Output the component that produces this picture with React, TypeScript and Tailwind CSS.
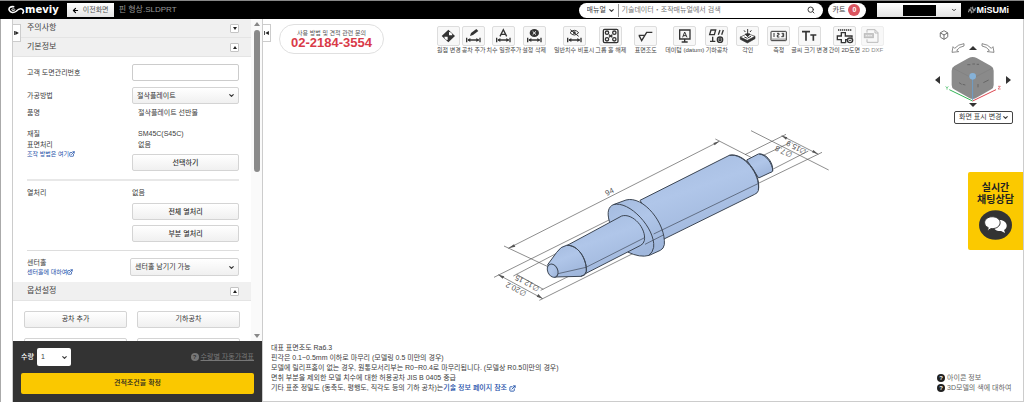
import { useState } from "react";
import type { ReactNode } from "react";
import { ArrowLeft, Box, ChevronDown, ExternalLink, Search } from "lucide-react";

type Tool = {
  label: string;
  icon: ReactNode;
  disabled?: boolean;
};

const buttonStyle =
  "rounded-[2px] border border-[#d4d4d4] bg-gradient-to-b from-white to-[#f0f0f0] text-[#333]";

// Horizontal dimension arrow shared by several tool icons
const DimensionArrow = () => (
  <g>
    <path d="M14 35v14M54 35v14M18 42h32" stroke="#333" strokeWidth="4" />
    <path d="M16 42l9-6v12zM52 42l-9-6v12z" fill="#333" />
  </g>
);

const toolGroups: Tool[][] = [
  [
    {
      label: "원점 변경",
      icon: (
        <g>
          <path d="M34 11l20 19-20 19-20-19z" fill="#333" />
          <path d="M36 28V18a11 11 0 0 1 10 10zM32 32v10a11 11 0 0 1-10-10z" fill="#fff" />
        </g>
      ),
    },
    {
      label: "공차 추가",
      icon: (
        <g>
          <path d="M24 30l3-9 16-12 6 6-16 12z" fill="#333" />
          <DimensionArrow />
        </g>
      ),
    },
    {
      label: "치수 일괄추가",
      icon: (
        <g>
          <path d="M24 31L34 11l10 20M28 25h12" fill="none" stroke="#333" strokeWidth="4" />
          <DimensionArrow />
        </g>
      ),
    },
    {
      label: "설정 삭제",
      icon: (
        <g>
          <ellipse cx="34" cy="21" rx="14" ry="12" fill="#333" />
          <path d="M29 16l10 10M39 16l-10 10" stroke="#fff" strokeWidth="3" />
          <DimensionArrow />
        </g>
      ),
    },
  ],
  [
    {
      label: "일반치수 비표시",
      icon: (
        <g>
          <path d="M21 20q13-14 26 0q-13 14-26 0z" fill="none" stroke="#333" strokeWidth="3" />
          <circle cx="34" cy="20" r="4" fill="#333" />
          <path d="M22 11l25 20" stroke="#333" strokeWidth="3" />
          <DimensionArrow />
        </g>
      ),
    },
    {
      label: "그룹 홀 해제",
      icon: (
        <g fill="none" stroke="#333" strokeWidth="4">
          <rect x="13" y="10" width="44" height="40" rx="4" />
          <circle cx="24" cy="20" r="5" />
          <circle cx="46" cy="20" r="5" />
          <circle cx="24" cy="40" r="5" />
          <circle cx="46" cy="40" r="5" />
          <path d="M30 26l10 8M40 26l-10 8" />
        </g>
      ),
    },
  ],
  [
    {
      label: "표면조도",
      icon: <path d="M14 28h17M15 28l8 16 15-25h17" fill="none" stroke="#333" strokeWidth="4" />,
    },
  ],
  [
    {
      label: "데이텀 (datum)",
      icon: (
        <g>
          <path d="M20 12h31v27H20zM35 39v8M26 48h18" fill="none" stroke="#333" strokeWidth="4" />
          <path d="M29 34l6-16 7 16M31 29h8" fill="none" stroke="#333" strokeWidth="3" />
        </g>
      ),
    },
    {
      label: "기하공차",
      icon: (
        <g fill="none" stroke="#333" strokeWidth="4">
          <path d="M18 12h14l-4 14H14zM40 26l5-14M50 26l5-14M23 32v14M15 46h16" />
          <circle cx="45" cy="41" r="8" />
          <circle cx="45" cy="41" r="3" />
        </g>
      ),
    },
  ],
  [
    {
      label: "각인",
      icon: (
        <g stroke="#333" strokeWidth="2">
          <path d="M13 33v7l21 11 23-13v-7L34 43z" fill="#333" />
          <path d="M13 33l22-10 22 8-23 12z" fill="#fff" />
          <path d="M35 9v20M28 24l7 8 7-8zM24 13l4 5M46 13l-4 5" fill="#333" strokeWidth="3" />
          <path d="M25 33l9 4M35 36l10-5" strokeWidth="3" />
        </g>
      ),
    },
  ],
  [
    {
      label: "측정",
      icon: (
        <g fill="none" stroke="#333" strokeWidth="3">
          <rect x="12" y="16" width="46" height="28" rx="2" />
          <path d="M18 42v-5M24 42v-5M30 42v-5M36 42v-5M42 42v-5M48 42v-5M54 42v-5" strokeWidth="2" />
          <path d="M21 21v12M30 22h6v5h-5v6h6M44 22h6v10h-7M45 27h5" />
        </g>
      ),
    },
    {
      label: "글씨 크기 변경",
      icon: <path d="M12 17h24M24 15v29M37 27h18M46 25v19" fill="none" stroke="#333" strokeWidth="5" />,
    },
    {
      label: "간이 2D도면",
      icon: (
        <g fill="none" stroke="#333" strokeWidth="4">
          <path d="M15 12h41" strokeDasharray="4 2" />
          <path d="M38 50H25v-9H13V30h12V20h12v10h20v5M38 50v-9h4" />
          <ellipse cx="51" cy="43" rx="8" ry="7" />
          <path d="M47 43h8" strokeWidth="3" />
        </g>
      ),
    },
    {
      label: "2D DXF",
      disabled: true,
      icon: (
        <g fill="none" stroke="#bbb" strokeWidth="3">
          <path d="M18 20v-9h24l9 9v29H18v-9M42 11v10h9" />
          <rect x="10" y="23" width="27" height="12" fill="#ccc" />
          <path d="M14 29h19" stroke="#eee" strokeDasharray="5 2" />
        </g>
      ),
    },
  ],
];

const notes = [
  "대표 표면조도 Ra6.3",
  "핀각은 0.1~0.5mm 이하로 마무리 (모델링 0.5 미만의 경우)",
  "모델에 릴리프홈이 없는 경우, 원통모서리부는 R0~R0.4로 마무리됩니다. (모델상 R0.5미만의 경우)",
  "면취 부분을 제외한 모델 치수에 대한 허용공차 JIS B 0405 중급",
];

function Select({ id, label, options, className }: { id: string; label?: string; options: string[]; className: string }) {
  return (
    <div className={`relative flex items-center ${className}`}>
      <select id={id} aria-label={label} className="h-full w-full appearance-none bg-transparent pl-1 pr-2 outline-none">
        {options.map((option) => (
          <option key={option}>{option}</option>
        ))}
      </select>
      <ChevronDown className="pointer-events-none absolute right-[3px] size-[7px]" strokeWidth={4} />
    </div>
  );
}

function SectionHeader({ title, open, onToggle }: { title: string; open: boolean; onToggle: () => void }) {
  return (
    <div className="flex h-[19px] shrink-0 items-center justify-between border-b border-[#e4e4e4] bg-[#f0f0f0] pl-[14px] pr-3">
      <h2 className="text-[8px] text-[#444]">{title}</h2>
      <button
        type="button"
        aria-label={title}
        aria-expanded={open}
        onClick={onToggle}
        className="flex h-[9px] w-[9px] items-center justify-center rounded-[1px] border border-[#c4c4c4] bg-white"
      >
        <svg viewBox="0 0 8 6" className="h-[3px] w-1">
          <path d={open ? "M4 0l4 6H0z" : "M4 6l4-6H0z"} fill="#222" />
        </svg>
      </button>
    </div>
  );
}

function HelpIcon({ className }: { className: string }) {
  return (
    <span className={`flex size-[8px] shrink-0 items-center justify-center rounded-full text-[6px] font-bold leading-none ${className}`}>
      ?
    </span>
  );
}

function Header() {
  return (
    <header className="flex h-[19px] shrink-0 items-center border-t border-[#888] bg-black pl-2 pr-[15px]">
      <a href="#" className="flex items-center text-white">
        <svg viewBox="0 0 54 30" className="h-[10px] w-[17px]" fill="none" stroke="#fff" strokeWidth="5">
          <path d="M20 5C8 2 1 9 4 16c3 8 15 9 22 3 6-6 12-10 18-7 7 3 7 12 1 14" />
          <path d="M21 12c-5-2-10 0-9 3s7 2 11-1" strokeWidth="3" />
        </svg>
        <span className="font-['DejaVu_Sans'] text-[10px] font-bold leading-none">meviy</span>
      </a>
      <button type="button" className="ml-2 flex h-[14px] w-[47px] items-center justify-center gap-1 bg-gradient-to-b from-white to-[#e4e4e4] text-[#555]">
        <ArrowLeft className="size-[7px] text-black" strokeWidth={4} />
        이전화면
      </button>
      <h1 className="ml-[5px] text-[8px] text-[#999]">핀 형상.SLDPRT</h1>

      <form className="ml-auto flex h-[15px] w-[244px] items-center rounded-full bg-white pl-1 pr-2" onSubmit={(e) => e.preventDefault()}>
        <Select id="search-type" label="검색 대상" options={["매뉴얼"]} className="h-[13px] w-9 border-r border-[#999]" />
        <input
          type="text"
          aria-label="검색"
          placeholder="기술데이터・조작매뉴얼에서 검색"
          className="min-w-0 flex-1 bg-transparent px-[3px] outline-none placeholder:text-[#777]"
        />
        <button type="submit" aria-label="검색하기">
          <Search className="size-2" strokeWidth={3} />
        </button>
      </form>
      <a href="#" className="ml-[5px] flex h-[15px] w-[38px] items-center justify-center gap-[3px] rounded-full bg-white">
        카트
        <span className="flex size-3 items-center justify-center rounded-full bg-[#dc5560] font-bold text-white">0</span>
      </a>
      <button type="button" aria-label="계정" className="ml-[11px] flex h-[14px] w-[84px] items-center bg-gradient-to-b from-white to-[#e4e4e4] pl-[26px] pr-1">
        <span className="h-[11px] w-[33px] bg-black" />
        <ChevronDown className="ml-auto size-[6px]" strokeWidth={4} />
      </button>
      <a href="#" className="ml-[7px] flex items-center text-[9px] font-bold leading-none text-white">
        <svg viewBox="0 0 24 24" className="mr-px size-2" fill="none" stroke="#aaa" strokeWidth="3">
          <path d="M14 2v8h8V5M10 22v-8H2v5M2 10h7V3M22 14h-7v7" />
        </svg>
        MiSUMi
      </a>
    </header>
  );
}

function SidebarLink({ children }: { children: ReactNode }) {
  return (
    <a href="#" className="flex items-center text-[6px] leading-[8px] text-[#1d4fa8]">
      {children}
      <ExternalLink className="size-[6px]" strokeWidth={3} />
    </a>
  );
}

function Sidebar() {
  const [noticeOpen, setNoticeOpen] = useState(false);
  const [basicOpen, setBasicOpen] = useState(true);
  const [optionOpen, setOptionOpen] = useState(true);

  return (
    <aside className="relative ml-[11px] flex w-[250px] shrink-0 flex-col border-l border-[#ccc]">
      <button
        type="button"
        aria-label="패널 접기"
        className="absolute -left-px top-[5px] flex h-[18px] w-[9px] items-center justify-center border border-[#ccc] bg-white"
      >
        <svg viewBox="0 0 12 10" className="h-[4px] w-[5px]">
          <path d="M0 0h2v10H0zM3 0l9 5-9 5z" fill="#222" />
        </svg>
      </button>

      <div className="flex min-h-0 flex-1">
        <div className="min-w-0 flex-1 overflow-hidden">
          <SectionHeader title="주의사항" open={noticeOpen} onToggle={() => setNoticeOpen(!noticeOpen)} />
          <SectionHeader title="기본정보" open={basicOpen} onToggle={() => setBasicOpen(!basicOpen)} />

          {basicOpen && (
            <div className="pl-[14px] pr-3 leading-[10px]">
              <div className="grid grid-cols-[105px_1fr] items-center gap-y-[6px] pt-[7px]">
                <label htmlFor="drawing-no">고객 도면관리번호</label>
                <input id="drawing-no" type="text" className="h-[17px] w-full rounded-[2px] border border-[#ccc] px-1" />
                <label htmlFor="process">가공방법</label>
                <Select id="process" options={["절삭플레이트"]} className={`h-[17px] ${buttonStyle}`} />
              </div>
              <div className="grid grid-cols-[111px_1fr] pt-1">
                <span>품명</span>
                <span>절삭플레이트 선반물</span>
              </div>
              <div className="grid grid-cols-[111px_1fr] pt-[11px]">
                <span>재질</span>
                <span>SM45C(S45C)</span>
              </div>
              <div className="grid grid-cols-[111px_1fr] pt-px">
                <div>
                  <p>표면처리</p>
                  <SidebarLink>조작 방법은 여기</SidebarLink>
                </div>
                <span>없음</span>
              </div>
              <div className="-mt-1 border-b-2 border-[#e8e8e8] pb-2 pl-[105px]">
                <button type="button" className={`h-[17px] w-full font-medium ${buttonStyle}`}>선택하기</button>
              </div>

              <div className="grid grid-cols-[105px_1fr] gap-y-[5px] border-b border-[#ddd] pb-2 pt-[7px]">
                <span>열처리</span>
                <span>없음</span>
                <button type="button" className={`col-start-2 h-[17px] font-medium ${buttonStyle}`}>전체 열처리</button>
                <button type="button" className={`col-start-2 h-[17px] font-medium ${buttonStyle}`}>부분 열처리</button>
              </div>

              <div className="grid grid-cols-[103px_1fr] items-center pb-[6px] pt-[7px]">
                <div>
                  <label htmlFor="center-hole" className="block">센터홀</label>
                  <SidebarLink>센터홀에 대하여</SidebarLink>
                </div>
                <Select id="center-hole" options={["센터홀 남기기 가능"]} className={`h-[18px] ${buttonStyle}`} />
              </div>
            </div>
          )}

          <SectionHeader title="옵션설정" open={optionOpen} onToggle={() => setOptionOpen(!optionOpen)} />
          {optionOpen && (
            <div className="grid grid-cols-2 gap-x-[10px] gap-y-[10px] px-[11px] pt-[10px]">
              <button type="button" className={`h-[17px] ${buttonStyle}`}>공차 추가</button>
              <button type="button" className={`h-[17px] ${buttonStyle}`}>기하공차</button>
              <button type="button" aria-label="추가 옵션" className={`h-[17px] ${buttonStyle}`} />
              <button type="button" aria-label="기타 옵션" className={`h-[17px] ${buttonStyle}`} />
            </div>
          )}
        </div>

        <div className="flex w-[11px] shrink-0 flex-col items-center gap-1 bg-[#fafafa] py-[3px]">
          <svg viewBox="0 0 6 4" className="h-1 w-[6px]"><path d="M3 0l3 4H0z" fill="#888" /></svg>
          <div className="h-[45%] w-[6px] rounded-full bg-[#8a8a8a]" />
          <svg viewBox="0 0 6 4" className="mt-auto h-1 w-[6px]"><path d="M3 4l3-4H0z" fill="#888" /></svg>
        </div>
      </div>

      <div className="shrink-0 bg-[#333] px-2 pb-2 pt-[7px]">
        <div className="flex items-center">
          <label htmlFor="quantity" className="font-medium text-white">수량</label>
          <Select id="quantity" options={["1", "2", "3"]} className="ml-[3px] h-[18px] w-[34px] rounded-[2px] bg-white" />
          <a href="#" className="ml-auto flex items-center gap-[2px] text-[#777]">
            <HelpIcon className="bg-[#777] text-[#333]" />
            <span className="underline">수량별 자동가격표</span>
          </a>
        </div>
        <button type="button" className="mt-[7px] h-[21px] w-full rounded-[2px] bg-[#fac800] font-medium text-[#222]">
          견적조건을 확정
        </button>
      </div>
    </aside>
  );
}

function Toolbar() {
  return (
    <div className="flex items-start pl-4 pt-[5px]">
      <div className="flex h-[30px] w-[105px] shrink-0 flex-col items-center justify-center rounded-full border border-[#e0e0e0]">
        <p className="text-[6px] leading-[8px] text-[#555]">사용 방법 및 견적 관련 문의</p>
        <p className="text-[13px] font-bold leading-[12px] text-[#d93a48]">02-2184-3554</p>
      </div>
      <div className="ml-[53px] flex gap-2 pt-[2px]">
        {toolGroups.map((group, i) => (
          <div key={i} className="flex gap-px">
            {group.map((tool) => (
              <button
                key={tool.label}
                type="button"
                disabled={tool.disabled}
                className={`flex min-w-[23px] flex-col items-center whitespace-nowrap text-[6px] leading-[8px] ${tool.disabled ? "text-[#888]" : "text-[#444]"}`}
              >
                <svg
                  viewBox="3 3 63 54"
                  className={`h-5 w-[23px] rounded-[2px] border bg-[#f8f8f8] ${tool.disabled ? "border-[#eee]" : "border-[#ddd]"}`}
                >
                  {tool.icon}
                </svg>
                {tool.label}
              </button>
            ))}
          </div>
        ))}
      </div>
    </div>
  );
}

// Stepped pin with its dimension lines
function PinModel() {
  return (
    <svg viewBox="0 0 1080 570" className="h-[190px] w-[360px]" role="img" aria-label="핀 형상">
      <defs>
        <linearGradient id="body" x1="0" y1="0" x2="0.5" y2="1">
          <stop offset="0" stopColor="#a3bade" />
          <stop offset="0.5" stopColor="#b0c6e9" />
          <stop offset="1" stopColor="#a0b7dc" />
        </linearGradient>
      </defs>
      <g stroke="#555" strokeWidth="2" fill="none">
        <path d="M85 385L718 64M72 378L210 443M706 57L815 113" />
        <path d="M42 472L395 296M55 464L188 536M178 541L500 380" />
        <path d="M100 468L245 392M110 463L190 508M182 511L320 442" />
        <path d="M795 104L918 43M905 47L1015 103M835 190L1026 97M813 32L1046 150" />
        <path d="M850 106L930 68M870 152L985 93" />
      </g>
      <g stroke="#3c4654" strokeWidth="3" fill="url(#body)" strokeLinejoin="round">
        <path d="M800 120L835 102C855 98 880 124 878 152Q876 158 870 158L836 174z" />
        <path d="M838 102C858 104 879 132 878 154" fill="none" />
        <path d="M480 241L748 106C790 96 845 160 835 212Q833 219 824 223L550 358z" />
        <path d="M748 106C790 98 842 162 835 210" fill="none" />
        <path d="M388 304C380 275 386 260 400 254L438 240C490 226 558 310 553 374Q551 386 541 391L508 406Q480 414 443 396z" />
        <path d="M400 254C447 240 527 325 521 382Q519 397 505 407" fill="none" />
        <path d="M260 377L425 288C458 278 500 325 493 362Q491 371 482 376L318 460z" />
        <path d="M203 434L230 397Q242 379 260 376C295 374 321 418 319 454Q317 467 303 469L222 471z" />
        <path d="M260 376C295 374 321 418 319 454Q317 467 303 469" fill="none" />
        <ellipse cx="218" cy="452" rx="15" ry="21" transform="rotate(-26 218 452)" />
        <path d="M234 461L318 442L494 353M521 342L836 190M495 373L550 345" fill="none" strokeWidth="2" />
      </g>
      <g fill="#555">
        <path d="M85 385l17-12 4 7zM718 64l-18 5 4 7zM55 464l18 5-5 7zM188 536l-13-14-5 8zM905 47l17 5-4 7zM1015 103l-15-13-4 7z" />
      </g>
      <g fill="#555" fontSize="23" textAnchor="middle" fontFamily="Liberation Sans">
        <text x="392" y="222" transform="rotate(-27 392 222)">94</text>
        <text x="145" y="482" transform="rotate(207 145 482)">∅12.15</text>
        <text x="112" y="500" transform="rotate(207 112 500)">∅20.2</text>
        <text x="953" y="76" transform="rotate(207 953 76)">∅15.9</text>
        <text x="914" y="88" transform="rotate(207 914 88)">∅7.8</text>
      </g>
    </svg>
  );
}

function ArrowButton({ label, d, className }: { label: string; d: string; className: string }) {
  return (
    <button type="button" aria-label={label} className={`flex items-center justify-center ${className}`}>
      <svg viewBox="0 0 10 10" preserveAspectRatio="none" className="h-full w-full">
        <path d={d} fill="#333" />
      </svg>
    </button>
  );
}

function ViewCube() {
  return (
    <div className="flex w-[76px] flex-col">
      <button type="button" aria-label="등각 보기" className="ml-1 self-start">
        <Box className="size-[10px] text-[#555]" strokeWidth={2} />
      </button>
      <div className="flex items-center justify-center gap-1 pt-[3px]">
        <button type="button" aria-label="왼쪽 회전">
          <svg viewBox="0 0 40 30" className="h-[10px] w-[14px]" fill="#fff" stroke="#555" strokeWidth="2">
            <path d="M2 28l3-17 5 5Q20 4 38 2v7Q24 11 16 22l6 4z" />
          </svg>
        </button>
        <ArrowButton label="위" d="M5 0l5 10H0z" className="h-1 w-2" />
        <button type="button" aria-label="오른쪽 회전">
          <svg viewBox="0 0 40 30" className="h-[10px] w-[14px]" fill="#fff" stroke="#555" strokeWidth="2">
            <path d="M38 28l-3-17-5 5Q20 4 2 2v7Q16 11 24 22l-6 4z" />
          </svg>
        </button>
      </div>
      <div className="flex items-center justify-between pt-[3px]">
        <ArrowButton label="왼쪽" d="M10 0v10L0 5z" className="h-2 w-[5px]" />
        <svg viewBox="0 0 174 141" className="h-[47px] w-[58px]">
          <path d="M74 6q12-6 24 0l43 24q8 5 8 14v43q0 9-7 13l-46 26q-10 6-20 0L30 100q-7-4-7-13V44q0-9 8-14z" fill="#8a8a8a" />
          <path d="M26 36l60 31 60-31M86 67v58" stroke="#7f7f7f" strokeWidth="2" fill="none" />
          <path d="M70 26h9M85 24h8M98 25h7M45 80l8 5M56 85l8 2M102 84v10M118 80l16-8" stroke="#666" strokeWidth="3" />
          <path d="M86 60v72" stroke="#6fa0cc" strokeWidth="3" />
          <circle cx="86" cy="61" r="10" fill="#86b2d8" />
          <path d="M86 135L16 101" stroke="#35b558" strokeWidth="3" />
          <path d="M86 135l70-34" stroke="#dc4650" strokeWidth="3" />
          <path d="M5 91l4 5 4-5M9 96v5" stroke="#35b558" strokeWidth="2" fill="none" />
          <path d="M162 91h7l-7 8h8" stroke="#dc4650" strokeWidth="2" fill="none" />
        </svg>
        <ArrowButton label="오른쪽" d="M0 0v10l10-5z" className="h-2 w-[5px]" />
      </div>
      <ArrowButton label="아래" d="M0 0h10L5 10z" className="h-1 w-2 self-center" />
    </div>
  );
}

export default function App() {
  return (
    <div className="flex h-screen flex-col bg-white font-['Liberation_Sans','Noto_Sans_CJK_KR',sans-serif] text-[7px] text-[#3c3c3c]">
      <Header />
      <div className="flex min-h-0 flex-1 border-l border-[#aaa]">
        <Sidebar />

        <main className="relative flex min-w-0 flex-1 border-x border-b border-[#ccc]">
          <button
            type="button"
            aria-label="작업 영역 넓히기"
            className="absolute -left-px top-[5px] flex h-[18px] w-[9px] items-center justify-center border border-[#ccc] bg-white"
          >
            <svg viewBox="0 0 12 10" className="h-[4px] w-[5px]">
              <path d="M0 0h2v10H0zM12 0v10L3 5z" fill="#222" />
            </svg>
          </button>

          <div className="flex min-w-0 flex-1 flex-col">
            <Toolbar />
            <div className="flex min-h-0 flex-1 justify-end pr-[95px] pt-[66px]">
              <PinModel />
            </div>
            <div className="whitespace-nowrap pb-2 pl-2 leading-[10px]">
              {notes.map((note) => (
                <p key={note}>{note}</p>
              ))}
              <p>
                기타 표준 정밀도 (동축도, 평행도, 직각도 등의 기하 공차)는
                <a href="#" className="font-medium text-[#1d4fa8]">
                  기술 정보 페이지 참조 <ExternalLink className="inline size-[7px]" strokeWidth={3} />
                </a>
              </p>
            </div>
          </div>

          <div className="flex w-[88px] shrink-0 flex-col pt-[11px]">
            <ViewCube />
            <Select
              id="view-mode"
              label="화면 표시"
              options={["화면 표시 변경"]}
              className="mr-[10px] mt-1 h-[13px] w-[59px] self-end rounded-[2px] border border-[#444]"
            />
            <a href="#" className="mt-[48px] flex w-[55px] flex-col items-center self-end rounded-l-[2px] bg-[#fbc900] py-[10px] text-center text-[10px] font-bold leading-[12px] text-[#222]">
              실시간
              <br />
              채팅상담
              <svg viewBox="0 0 100 90" className="mt-1 h-[30px] w-[33px]">
                <ellipse cx="50" cy="45" rx="50" ry="45" fill="#333" />
                <path d="M62 30c13 0 22 8 22 17 0 6-3 10-8 13l3 9-12-6c-14 1-24-6-24-16s8-17 19-17z" fill="#fff" />
                <path d="M40 20c14 0 24 8 24 18S54 56 40 56l-4 0-11 7 3-10c-7-3-11-9-11-15 0-10 10-18 23-18z" fill="#fff" stroke="#333" strokeWidth="3" />
              </svg>
            </a>
            <div className="mt-auto flex flex-col pb-2 pl-[2px] leading-[10px] text-[#666]">
              <a href="#" className="flex items-center gap-[2px] whitespace-nowrap">
                <HelpIcon className="bg-[#222] text-white" />
                아이콘 정보
              </a>
              <a href="#" className="flex items-center gap-[2px] whitespace-nowrap">
                <HelpIcon className="bg-[#222] text-white" />
                3D모델의 색에 대하여
              </a>
            </div>
          </div>
        </main>
      </div>
    </div>
  );
}
